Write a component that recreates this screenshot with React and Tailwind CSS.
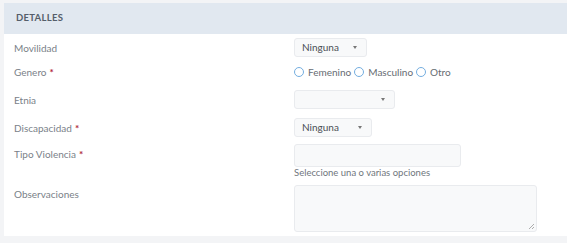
import React from "react";

function Caret() {
  return <span className="ml-auto w-0 h-0 border-l-[2.5px] border-r-[2.5px] border-t-[3px] border-l-transparent border-r-transparent border-t-[#777]" />;
}

function Select({ value, width }) {
  return (
    <div className={`flex items-center h-[19px] ${width} px-[7px] pr-[9px] bg-[#f8f9fa] border border-[#e9ebee] rounded-[3px] text-[10px] text-[#4a4f55]`}>
      <span>{value}</span>
      <Caret />
    </div>
  );
}

function Radio({ label }) {
  return (
    <label className="flex items-center gap-[4px] mr-[3px]">
      <span className="w-[10px] h-[10px] rounded-full border border-[#74aee0] bg-white" />
      <span>{label}</span>
    </label>
  );
}

function Label({ children, required }) {
  return (
    <div className="w-[280px] shrink-0 text-[10px] leading-[12px] text-[#7a8188]">
      {children}
      {required && <span className="text-[#b0273a] ml-[3px] font-bold">*</span>}
    </div>
  );
}

export default function App() {
  return (
    <div className="w-[567px] h-[243px] bg-[#f3f4f6] pt-[3px] pl-[4px] overflow-hidden" style={{ fontFamily: "Lato, 'Open Sans', sans-serif" }}>
      <div className="bg-white h-[233px] w-[600px]">
        <div className="h-[31px] bg-[#e1e8f0] flex items-center pl-[12px] text-[9.5px] font-bold text-[#555e6a] tracking-[0.3px]">
          DETALLES
        </div>
        <div className="pl-[10px]">
          <div className="flex items-center h-[19px] mt-[4px]">
            <Label>Movilidad</Label>
            <Select value="Ninguna" width="w-[73px]" />
          </div>
          <div className="flex items-center h-[12px] mt-[9px]">
            <Label required>Genero</Label>
            <div className="flex items-center text-[10px] text-[#666c72]">
              <Radio label="Femenino" />
              <Radio label="Masculino" />
              <Radio label="Otro" />
            </div>
          </div>
          <div className="flex items-center h-[19px] mt-[12px]">
            <Label>Etnia</Label>
            <Select value="" width="w-[101px]" />
          </div>
          <div className="flex items-center h-[19px] mt-[9px]">
            <Label required>Discapacidad</Label>
            <Select value="Ninguna" width="w-[78px]" />
          </div>
          <div className="flex items-start mt-[7px]">
            <div className="pt-[4px]">
              <Label required>Tipo Violencia</Label>
            </div>
            <div>
              <div className="w-[167px] h-[23px] bg-[#f8f9fa] border border-[#e9ebee] rounded-[3px]" />
              <div className="text-[9.5px] leading-[12px] text-[#6f767d]">Seleccione una o varias opciones</div>
            </div>
          </div>
          <div className="flex items-start mt-[6px]">
            <div className="pt-[3px]">
              <Label>Observaciones</Label>
            </div>
            <div className="relative w-[243px] h-[47px] bg-[#f8f9fa] border border-[#e9ebee] rounded-[3px]">
              <svg className="absolute right-[1px] bottom-[1px]" width="7" height="7" viewBox="0 0 7 7">
                <path d="M6 1L1 6M6 4L4 6" stroke="#999" strokeWidth="0.8" />
              </svg>
            </div>
          </div>
        </div>
      </div>
    </div>
  );
}
